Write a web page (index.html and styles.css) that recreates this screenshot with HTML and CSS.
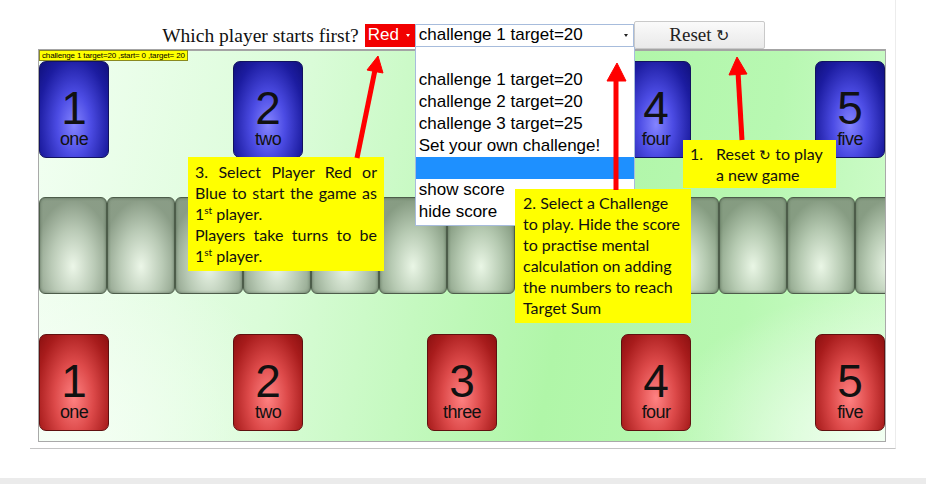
FILE: index.html
```html
<!DOCTYPE html>
<html lang="en">
<head>
  <meta charset="UTF-8" />
  <meta name="viewport" content="width=device-width, initial-scale=1.0"/>
  <title>Target Sum</title>
  <link rel="stylesheet" href="styles.css">
</head>
<body>

  <div class="page">

    <div class="toolbar">
      <span class="question">Which player starts first?</span>
      <div class="select player-select">Red<span class="caret"></span></div>
      <div class="select challenge-select">challenge 1 target=20<span class="caret"></span>
        <ul class="options">
          <li>&nbsp;</li>
          <li>challenge 1 target=20</li>
          <li>challenge 2 target=20</li>
          <li>challenge 3 target=25</li>
          <li>Set your own challenge!</li>
          <li class="active">&nbsp;</li>
          <li>show score</li>
          <li>hide score</li>
        </ul>
      </div>
      <button class="reset">Reset <span class="cw">↻</span></button>
    </div>

    <div class="board">
      <div class="status">challenge 1 target=20 ,start= 0 ,target= 20</div>

      <div class="hand blue">
        <div class="card"><span class="num">1</span><span class="word">one</span></div>
        <div class="card"><span class="num">2</span><span class="word">two</span></div>
        <div class="card"><span class="num">3</span><span class="word">three</span></div>
        <div class="card"><span class="num">4</span><span class="word">four</span></div>
        <div class="card"><span class="num">5</span><span class="word">five</span></div>
      </div>

      <div class="track">
        <div class="tile"></div><div class="tile"></div><div class="tile"></div>
        <div class="tile"></div><div class="tile"></div><div class="tile"></div>
        <div class="tile"></div><div class="tile"></div><div class="tile"></div>
        <div class="tile"></div><div class="tile"></div><div class="tile"></div>
        <div class="tile"></div>
      </div>

      <div class="hand red">
        <div class="card"><span class="num">1</span><span class="word">one</span></div>
        <div class="card"><span class="num">2</span><span class="word">two</span></div>
        <div class="card"><span class="num">3</span><span class="word">three</span></div>
        <div class="card"><span class="num">4</span><span class="word">four</span></div>
        <div class="card"><span class="num">5</span><span class="word">five</span></div>
      </div>
    </div>

    <!-- notes -->
    <div class="note note-reset">
      <span class="idx">1.</span>
      <span>Reset <span class="cw">↻</span> to play<br>a new game</span>
    </div>
    <div class="note note-challenge">
      2. Select a Challenge<br>to play. Hide the score<br>to practise mental<br>calculation on adding<br>the numbers to reach<br>Target Sum
    </div>
    <div class="note note-player">
      3. Select Player Red or Blue to start the game as 1<sup>st</sup> player.<br>
      Players take turns to be 1<sup>st</sup> player.
    </div>
  </div>

  <div class="footer-bar"></div>

  <svg class="arrows" width="926" height="484" viewBox="0 0 926 484">
    <g fill="#ff0000" stroke="#ff0000">
      <line x1="357" y1="158" x2="375" y2="70" stroke-width="5"/>
      <polygon points="378,56 383,73 367,70" stroke-width="1"/>
      <line x1="616" y1="190" x2="616" y2="78" stroke-width="5"/>
      <polygon points="617,63 626,81 607,81" stroke-width="1"/>
      <line x1="742" y1="140" x2="738" y2="72" stroke-width="5"/>
      <polygon points="737,57 747,74 729,75" stroke-width="1"/>
    </g>
  </svg>

</body>
</html>
```

FILE: styles.css
```css
:root {
  --note-yellow: #ffff00;
  --select-border: #a7bcdc;
  --hilite: #1e90ff;
}

body {
  margin: 0;
  background: white;
  color: #000;
  font-family: 'Liberation Sans', Arial, sans-serif;
  position: relative;
  height: 484px;
  overflow: hidden;
}

.page {
  position: relative;
  width: 865px;
  margin: 0 auto 0 30px;
  padding: 21px 0 6px;
  border-right: 1px solid #ececec;
  border-bottom: 1px solid #c4c4c4;
}

/* top controls */
.toolbar {
  display: flex;
  justify-content: center;
  align-items: center;
  height: 28px;
  padding-left: 2px;
}

.question {
  font-family: 'Liberation Serif', 'Times New Roman', serif;
  font-size: 19.5px;
  line-height: 23px;
  margin-right: 6px;
  color: #111;
}

.select {
  position: relative;
  box-sizing: border-box;
  height: 23px;
  display: flex;
  align-items: center;
  font-size: 17px;
  padding-left: 3px;
}

.player-select {
  width: 50px;
  background: #f20000;
  color: white;
}

.challenge-select {
  width: 219px;
  background: white;
  border: 1px solid var(--select-border);
  z-index: 3;
}

.caret {
  margin-left: auto;
  margin-right: 5px;
  width: 0;
  height: 0;
  border-left: 2px solid transparent;
  border-right: 2px solid transparent;
  border-top: 3px solid #222;
}

.player-select .caret {
  border-top-color: white;
}

.options {
  position: absolute;
  left: -1px;
  top: 22px;
  width: 218px;
  margin: 0;
  padding: 0 0 2px;
  list-style: none;
  background: white;
  border: 1px solid var(--select-border);
  border-top: none;
}

.options li {
  height: 22px;
  line-height: 22px;
  padding-left: 3px;
  white-space: nowrap;
}

.options li.active {
  background: var(--hilite);
}

.reset {
  width: 131px;
  height: 28px;
  font-family: 'Liberation Serif', 'Times New Roman', serif;
  font-size: 19px;
  color: #222;
  background: linear-gradient(#fafafa, #e9e9e9);
  border: 1px solid #c9c9c9;
  border-radius: 2px;
  padding: 0;
}

.cw {
  font-weight: 300;
  font-size: 0.85em;
}

/* game board */
.board {
  position: relative;
  margin-left: 8px;
  width: 846px;
  padding: 10px 0;
  border: 1px solid #a9a9a9;
  border-top: 2px solid #a4a4a4;
  background:
    radial-gradient(ellipse 230px 150px at 100% 100%, rgba(244, 255, 244, 0.95), rgba(244, 255, 244, 0)),
    radial-gradient(ellipse 260px 200px at 0% 100%, rgba(248, 255, 248, 0.9), rgba(248, 255, 248, 0)),
    linear-gradient(100deg, #f2fff2 0%, #dafcd8 30%, #b0f6a8 62%, #b8f8b2 82%, #d2fcce 100%);
  display: flex;
  flex-direction: column;
}

.status {
  position: absolute;
  left: 0;
  top: -1px;
  background: #ffff00;
  border: 1px solid #8a8a20;
  font-size: 8px;
  line-height: 9px;
  padding: 0 2px;
  letter-spacing: -0.15px;
  z-index: 1;
}

.hand {
  display: flex;
  justify-content: space-between;
}

.card {
  box-sizing: border-box;
  width: 70px;
  height: 97px;
  border-radius: 7px;
  border: 1px solid #333;
  display: flex;
  flex-direction: column;
  align-items: center;
  justify-content: flex-end;
  padding-bottom: 9px;
  color: #111;
}

.blue .card {
  background: radial-gradient(ellipse at 50% 66%, #8484ff 0%, #4c4ce4 35%, #1c1ca0 75%, #10107c 100%);
  border-color: #121260;
}

.red .card {
  background: radial-gradient(ellipse at 50% 66%, #ff8282 0%, #dd4a4a 40%, #a81c1c 78%, #8c1010 100%);
  border-color: #601010;
}

.num {
  font-size: 46px;
  line-height: 44px;
}

.word {
  font-size: 18px;
  line-height: 18px;
  letter-spacing: -0.6px;
}

.track {
  display: flex;
  overflow: hidden;
  margin: 39px 0 40px;
}

.tile {
  flex: 0 0 68px;
  box-sizing: border-box;
  height: 97px;
  border: 1px solid #4d5d4a;
  border-radius: 6px;
  background: radial-gradient(ellipse 60% 70% at 50% 72%, rgba(236, 246, 232, 0.95) 0%, rgba(180, 196, 176, 0.9) 55%, rgba(128, 146, 124, 0.9) 100%);
  box-shadow: inset 0 0 3px rgba(40, 60, 40, 0.5);
}

/* yellow notes */
.note {
  position: absolute;
  box-sizing: border-box;
  background: var(--note-yellow);
  font-family: Lato, 'Open Sans', sans-serif;
  font-size: 16px;
  line-height: 21px;
  color: #111;
  z-index: 4;
}

.note sup {
  font-size: 10px;
  line-height: 0;
}

.note-reset {
  left: 653px;
  top: 140px;
  width: 153px;
  height: 48px;
  padding: 4px 0 0 7px;
  line-height: 20px;
  display: flex;
}

.note-reset .idx {
  width: 26px;
  flex: none;
}

.note-challenge {
  left: 485px;
  top: 189px;
  width: 176px;
  height: 134px;
  padding: 3px 0 0 8px;
  white-space: nowrap;
}

.note-player {
  left: 158px;
  top: 157px;
  width: 196px;
  height: 114px;
  padding: 4px 7px 0;
  text-align: justify;
}

.footer-bar {
  margin-top: 29px;
  height: 6px;
  background: #ebebeb;
}

.arrows {
  position: absolute;
  left: 0;
  top: 0;
  z-index: 5;
  pointer-events: none;
}
```
